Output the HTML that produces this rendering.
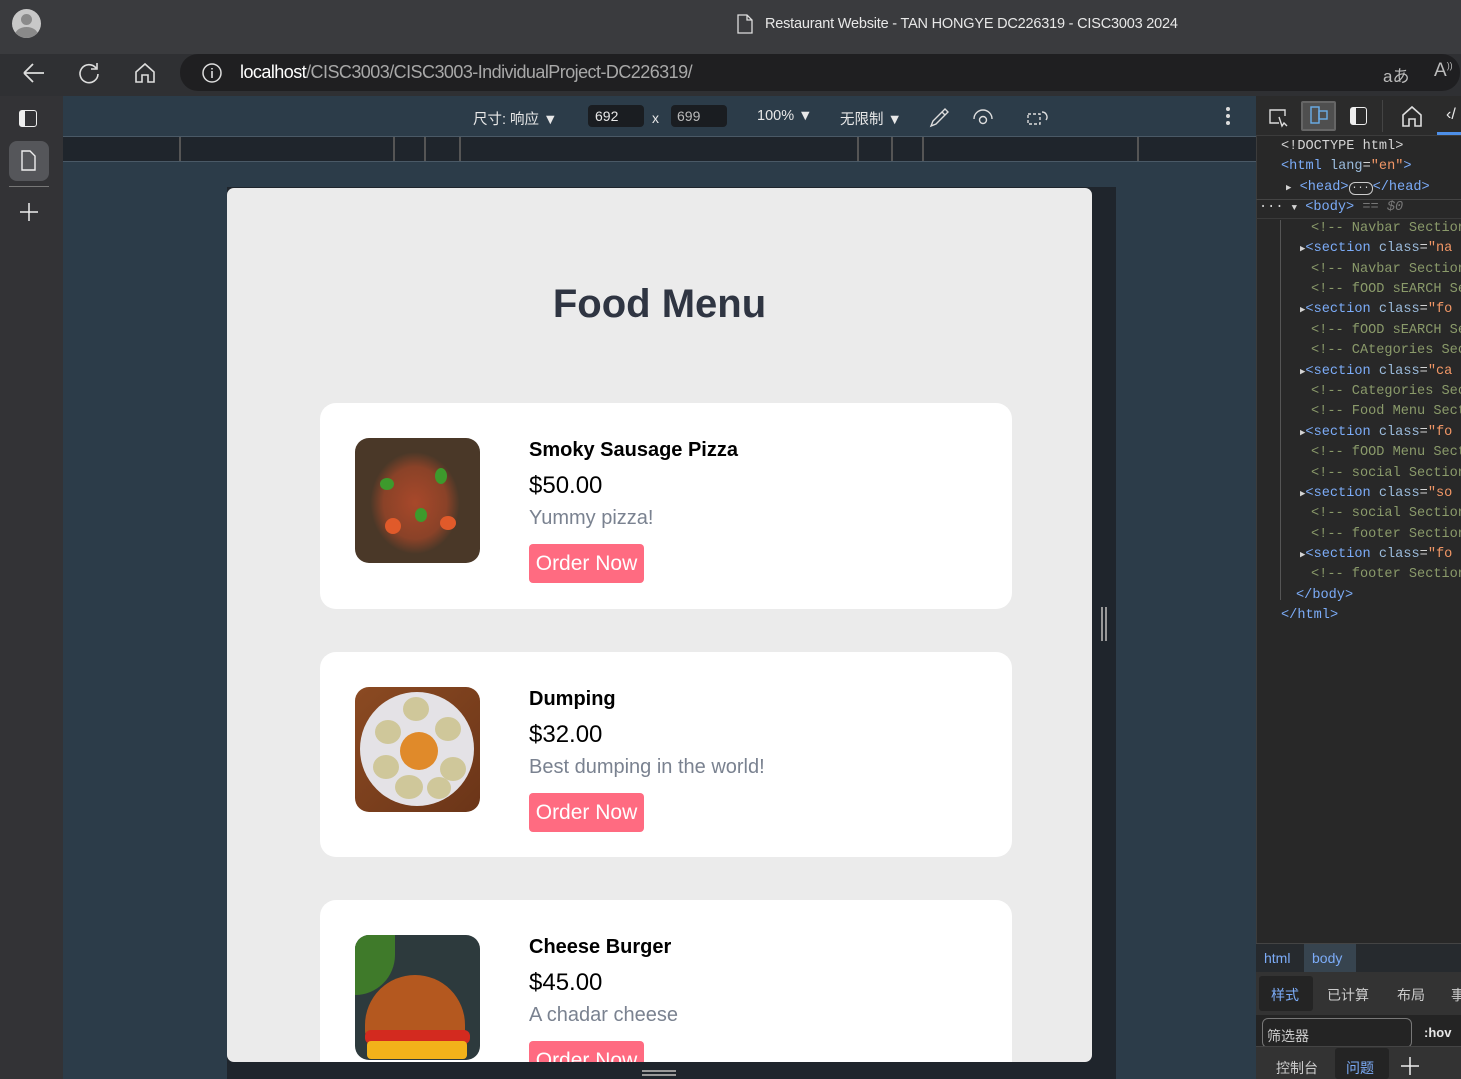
<!DOCTYPE html>
<html><head><meta charset="utf-8">
<style>
*{box-sizing:border-box;margin:0;padding:0}
body{width:1461px;height:1079px;overflow:hidden;background:#242424;font-family:"Liberation Sans","Noto Sans CJK SC",sans-serif;position:relative}
.abs{position:absolute}
.t{color:#e8e8e8;font-size:14px;white-space:nowrap}
.code{font-family:"Liberation Mono","DejaVu Sans Mono",monospace;font-size:13.6px;white-space:nowrap;position:absolute;left:0}
.tag{color:#7cacf8}.at{color:#9bbbdc}.cm{color:#8a9a6a}.val{color:#f29766}.pl{color:#d4d4d4}
.card{position:absolute;left:320px;width:692px;background:#fff;border-radius:16px}
.card .img{position:absolute;left:35px;top:35px;width:125px;height:125px;border-radius:14px;overflow:hidden}
.card h3{position:absolute;left:209px;top:36px;font-size:20px;font-weight:bold;color:#000}
.card .pr{position:absolute;left:209px;top:69px;font-size:24px;color:#000}
.card .ds{position:absolute;left:209px;top:104px;font-size:20px;color:#7a8290}
.card .bt{position:absolute;left:209px;top:141px;width:115px;height:39px;background:#ff6b81;border-radius:4px;color:#fff;font-size:21px;line-height:39px;text-align:center}
</style></head><body>
<div class="abs" style="left:0;top:0;width:1461px;height:54px;background:#3a3b3e"></div>
<div class="abs" style="left:12px;top:9px;width:29px;height:29px;border-radius:50%;background:#c8c8c8;overflow:hidden">
<div class="abs" style="left:9px;top:5px;width:11px;height:11px;border-radius:50%;background:#8a8a8a"></div>
<div class="abs" style="left:3px;top:18px;width:23px;height:16px;border-radius:50%;background:#8a8a8a"></div></div>
<svg class="abs" style="left:736px;top:14px" width="18" height="20"><path d="M2 1h9l5 5v13H2z M11 1v5h5" fill="none" stroke="#ddd" stroke-width="1.3"/></svg>
<div class="abs t" style="left:765px;top:16px;font-size:14.5px;letter-spacing:-0.2px">Restaurant Website - TAN HONGYE DC226319 - CISC3003 2024</div>
<div class="abs" style="left:0;top:54px;width:1461px;height:42px;background:#2f3033"></div>
<svg class="abs" style="left:20px;top:60px" width="28" height="26"><path d="M4 13h20M4 13l9-9M4 13l9 9" fill="none" stroke="#ddd" stroke-width="1.8"/></svg>
<svg class="abs" style="left:76px;top:60px" width="26" height="26"><path d="M20 8a9 9 0 1 0 2 6M21 3v6h-6" fill="none" stroke="#ddd" stroke-width="1.6"/></svg>
<svg class="abs" style="left:132px;top:60px" width="26" height="26"><path d="M4 12l9-8 9 8v10h-6v-7h-6v7H4z" fill="none" stroke="#ddd" stroke-width="1.6"/></svg>
<div class="abs" style="left:180px;top:54px;width:1280px;height:37px;border-radius:18px;background:#1f1f21"></div>
<svg class="abs" style="left:201px;top:62px" width="22" height="22"><circle cx="11" cy="11" r="9" fill="none" stroke="#ddd" stroke-width="1.5"/><path d="M11 9v7M11 6v1.5" stroke="#ddd" stroke-width="1.6"/></svg>
<div class="abs t" style="left:240px;top:62px;font-size:18px;color:#fff;letter-spacing:-0.55px">localhost<span style="color:#a8a8a8">/CISC3003/CISC3003-IndividualProject-DC226319/</span></div>
<div class="abs t" style="left:1383px;top:62px;font-size:17px;color:#bbb">aあ</div>
<div class="abs t" style="left:1434px;top:60px;font-size:19px;color:#bbb">A<sup style="font-size:9px">))</sup></div>
<div class="abs" style="left:0;top:96px;width:63px;height:983px;background:#333336"></div>
<div class="abs" style="left:19px;top:110px;width:18px;height:17px;border:1.6px solid #eee;border-radius:3px;border-left-width:6px"></div>
<div class="abs" style="left:9px;top:141px;width:40px;height:40px;background:#55565a;border-radius:8px"></div>
<svg class="abs" style="left:19px;top:150px" width="20" height="22"><path d="M3 1h8l5 5v14H3z" fill="none" stroke="#eee" stroke-width="1.4"/></svg>
<div class="abs" style="left:9px;top:186px;width:40px;height:1px;background:#777"></div>
<svg class="abs" style="left:18px;top:201px" width="22" height="22"><path d="M11 2v18M2 11h18" stroke="#eee" stroke-width="1.5"/></svg>
<div class="abs" style="left:63px;top:96px;width:1193px;height:983px;background:#2c3c49"></div>
<div class="abs t" style="left:473px;top:108px;font-size:14.5px">尺寸: 响应 ▼</div>
<div class="abs" style="left:588px;top:105px;width:56px;height:22px;background:#1a1d21;border-radius:4px"></div>
<div class="abs t" style="left:595px;top:108px">692</div>
<div class="abs t" style="left:652px;top:110px">x</div>
<div class="abs" style="left:671px;top:105px;width:56px;height:22px;background:#1a1d21;border-radius:4px"></div>
<div class="abs t" style="left:677px;top:108px;color:#bbb">699</div>
<div class="abs t" style="left:757px;top:108px;font-size:14.5px">100% ▼</div>
<div class="abs t" style="left:840px;top:108px;font-size:14.5px">无限制 ▼</div>
<svg class="abs" style="left:928px;top:105px" width="22" height="24"><path d="M3 21l2-5 9-9 3 3-9 9zM14 7l3-3 3 3-3 3z" fill="none" stroke="#ddd" stroke-width="1.4"/></svg>
<svg class="abs" style="left:971px;top:106px" width="24" height="22"><path d="M3 13a9 9 0 0 1 18 0" fill="none" stroke="#ddd" stroke-width="1.4"/><circle cx="12" cy="14" r="3.5" fill="none" stroke="#ddd" stroke-width="1.4"/></svg>
<svg class="abs" style="left:1026px;top:106px" width="24" height="22"><rect x="2" y="8" width="12" height="10" fill="none" stroke="#ddd" stroke-width="1.4" stroke-dasharray="3 2"/><path d="M16 6a5 5 0 0 1 4 8" fill="none" stroke="#ddd" stroke-width="1.4"/></svg>
<div class="abs" style="left:1226px;top:107px;width:4px;height:4px;border-radius:2px;background:#ddd;box-shadow:0 7px #ddd,0 14px #ddd"></div>
<div class="abs" style="left:63px;top:136px;width:1193px;height:26px;background:#1f252c;border-top:1px solid #4a5966;border-bottom:1px solid #4a5966"></div>
<div class="abs" style="left:179px;top:137px;width:2px;height:24px;background:#555"></div>
<div class="abs" style="left:393px;top:137px;width:2px;height:24px;background:#555"></div>
<div class="abs" style="left:424px;top:137px;width:2px;height:24px;background:#555"></div>
<div class="abs" style="left:459px;top:137px;width:2px;height:24px;background:#555"></div>
<div class="abs" style="left:857px;top:137px;width:2px;height:24px;background:#555"></div>
<div class="abs" style="left:891px;top:137px;width:2px;height:24px;background:#555"></div>
<div class="abs" style="left:922px;top:137px;width:2px;height:24px;background:#555"></div>
<div class="abs" style="left:1137px;top:137px;width:2px;height:24px;background:#555"></div>
<div class="abs" style="left:227px;top:187px;width:889px;height:892px;background:#1f252c"></div>
<div class="abs" style="left:1101px;top:607px;width:2px;height:34px;background:#999;box-shadow:4px 0 #999"></div>
<div class="abs" style="left:642px;top:1070px;width:34px;height:2px;background:#999;box-shadow:0 4px #999"></div>
<div class="abs" style="left:227px;top:188px;width:865px;height:874px;background:#ebebeb;border-radius:7px;overflow:hidden">
<div class="abs" style="left:0;top:94px;width:865px;text-align:center;font-size:40px;font-weight:bold;color:#2f3542">Food Menu</div>
</div>
<div class="card" style="top:403px;height:206px">
<div class="img" style="background:radial-gradient(ellipse 42% 48% at 48% 52%,#a8482a 0,#8a4228 60%,#4a3828 85%),#3e3428">
<div class="abs" style="left:25px;top:40px;width:14px;height:12px;border-radius:50%;background:#3d9a2c"></div>
<div class="abs" style="left:80px;top:30px;width:12px;height:16px;border-radius:50%;background:#3d9a2c"></div>
<div class="abs" style="left:60px;top:70px;width:12px;height:14px;border-radius:50%;background:#3d9a2c"></div>
<div class="abs" style="left:30px;top:80px;width:16px;height:16px;border-radius:50%;background:#e05a2a"></div>
<div class="abs" style="left:85px;top:78px;width:16px;height:14px;border-radius:50%;background:#e05a2a"></div>
</div>
<h3>Smoky Sausage Pizza</h3><div class="pr">$50.00</div><div class="ds">Yummy pizza!</div><div class="bt">Order Now</div>
</div>
<div class="card" style="top:652px;height:205px">
<div class="img" style="background:linear-gradient(135deg,#8b4a22,#6b3518)">
<div class="abs" style="left:5px;top:5px;width:114px;height:114px;border-radius:50%;background:#e4e2e6"></div>
<div class="abs" style="left:45px;top:45px;width:38px;height:38px;border-radius:50%;background:#e08a2a"></div>
<div class="abs" style="left:48px;top:10px;width:26px;height:24px;border-radius:50%;background:#cfc79a"></div>
<div class="abs" style="left:20px;top:33px;width:26px;height:24px;border-radius:50%;background:#cfc79a"></div>
<div class="abs" style="left:80px;top:30px;width:26px;height:24px;border-radius:50%;background:#cfc79a"></div>
<div class="abs" style="left:18px;top:68px;width:26px;height:24px;border-radius:50%;background:#cfc79a"></div>
<div class="abs" style="left:85px;top:70px;width:26px;height:24px;border-radius:50%;background:#cfc79a"></div>
<div class="abs" style="left:40px;top:88px;width:28px;height:24px;border-radius:50%;background:#cfc79a"></div>
<div class="abs" style="left:72px;top:90px;width:24px;height:22px;border-radius:50%;background:#cfc79a"></div>
</div>
<h3>Dumping</h3><div class="pr">$32.00</div><div class="ds">Best dumping in the world!</div><div class="bt">Order Now</div>
</div>
<div class="abs" style="left:227px;top:900px;width:865px;height:162px;overflow:hidden">
<div class="card" style="left:93px;top:0;height:206px">
<div class="img" style="background:#2d3a3d">
<div class="abs" style="left:0;top:0;width:40px;height:60px;background:#3f7a2a;border-radius:0 0 40px 0"></div>
<div class="abs" style="left:10px;top:40px;width:100px;height:66px;border-radius:50px 50px 10px 10px;background:#b4581f"></div>
<div class="abs" style="left:10px;top:95px;width:105px;height:14px;border-radius:6px;background:#d32a1f"></div>
<div class="abs" style="left:12px;top:106px;width:100px;height:18px;background:#f2b21a;border-radius:4px"></div>
</div>
<h3>Cheese Burger</h3><div class="pr">$45.00</div><div class="ds">A chadar cheese</div><div class="bt">Order Now</div>
</div></div>
<div class="abs" style="left:1256px;top:96px;width:205px;height:983px;background:#282828;border-left:1px solid #3c3c3c"></div>
<div class="abs" style="left:1256px;top:96px;width:205px;height:40px;background:#2b2b2b;border-bottom:1px solid #3c3c3c"></div>
<svg class="abs" style="left:1267px;top:106px" width="22" height="22"><path d="M12 17H3V4h15v6M12 11l3 9 2-3 3 3" fill="none" stroke="#ddd" stroke-width="1.4"/></svg>
<div class="abs" style="left:1301px;top:101px;width:35px;height:30px;background:#4f4f4f;border:2px solid #666;border-radius:2px"></div>
<svg class="abs" style="left:1308px;top:105px" width="22" height="22"><rect x="3" y="2" width="8" height="16" fill="none" stroke="#6aaeea" stroke-width="1.4"/><rect x="11" y="6" width="8" height="8" fill="none" stroke="#6aaeea" stroke-width="1.4"/></svg>
<div class="abs" style="left:1350px;top:107px;width:17px;height:18px;border:1.6px solid #eee;border-radius:3px;border-left-width:6px"></div>
<div class="abs" style="left:1382px;top:100px;width:1px;height:32px;background:#444"></div>
<svg class="abs" style="left:1400px;top:104px" width="24" height="24"><path d="M3 11l9-8 9 8v11h-6v-7h-6v7H3z" fill="none" stroke="#ddd" stroke-width="1.6"/></svg>
<div class="abs t" style="left:1446px;top:106px;font-size:16px">‹/</div>
<div class="abs" style="left:1437px;top:132px;width:24px;height:3px;background:#4d8fe8"></div>
<div class="abs" style="left:1256px;top:136px;width:205px;height:810px;overflow:hidden">
<div class="code" style="left:25px;top:3px"><span class="pl">&lt;!DOCTYPE html&gt;</span></div>
<div class="code" style="left:25px;top:23px"><span class="tag">&lt;html </span><span class="at">lang</span><span class="pl">=</span><span class="val">"en"</span><span class="tag">&gt;</span></div>
<div class="code" style="left:30px;top:44px"><span class="pl" style="font-size:9px">▶</span> <span class="tag">&lt;head&gt;</span><span class="pl" style="font-size:10px;border:1px solid #ccc;border-radius:6px;padding:0 2px">···</span><span class="tag">&lt;/head&gt;</span></div>
<div class="abs" style="left:0;top:63px;width:205px;height:20px;border-top:1px solid #444;border-bottom:1px solid #3a3a3a"></div>
<div class="code" style="left:3px;top:64px"><span class="pl">···</span> <span class="pl" style="font-size:9px">▼</span> <span class="tag">&lt;body&gt;</span> <span style="color:#777;font-style:italic">== $0</span></div>
<div class="abs" style="left:24px;top:84px;width:1px;height:380px;background:#555"></div>
<div class="code" style="left:55px;top:85px"><span class="cm">&lt;!-- Navbar Section</span></div>
<div class="code" style="left:44px;top:105px"><span class="pl" style="font-size:9px">▶</span><span class="tag">&lt;section </span><span class="at">class</span><span class="pl">=</span><span class="val">"na</span></div>
<div class="code" style="left:55px;top:126px"><span class="cm">&lt;!-- Navbar Section</span></div>
<div class="code" style="left:55px;top:146px"><span class="cm">&lt;!-- fOOD sEARCH Se</span></div>
<div class="code" style="left:44px;top:166px"><span class="pl" style="font-size:9px">▶</span><span class="tag">&lt;section </span><span class="at">class</span><span class="pl">=</span><span class="val">"fo</span></div>
<div class="code" style="left:55px;top:187px"><span class="cm">&lt;!-- fOOD sEARCH Se</span></div>
<div class="code" style="left:55px;top:207px"><span class="cm">&lt;!-- CAtegories Sec</span></div>
<div class="code" style="left:44px;top:228px"><span class="pl" style="font-size:9px">▶</span><span class="tag">&lt;section </span><span class="at">class</span><span class="pl">=</span><span class="val">"ca</span></div>
<div class="code" style="left:55px;top:248px"><span class="cm">&lt;!-- Categories Sec</span></div>
<div class="code" style="left:55px;top:268px"><span class="cm">&lt;!-- Food Menu Sect</span></div>
<div class="code" style="left:44px;top:289px"><span class="pl" style="font-size:9px">▶</span><span class="tag">&lt;section </span><span class="at">class</span><span class="pl">=</span><span class="val">"fo</span></div>
<div class="code" style="left:55px;top:309px"><span class="cm">&lt;!-- fOOD Menu Sect</span></div>
<div class="code" style="left:55px;top:330px"><span class="cm">&lt;!-- social Section</span></div>
<div class="code" style="left:44px;top:350px"><span class="pl" style="font-size:9px">▶</span><span class="tag">&lt;section </span><span class="at">class</span><span class="pl">=</span><span class="val">"so</span></div>
<div class="code" style="left:55px;top:370px"><span class="cm">&lt;!-- social Section</span></div>
<div class="code" style="left:55px;top:391px"><span class="cm">&lt;!-- footer Section</span></div>
<div class="code" style="left:44px;top:411px"><span class="pl" style="font-size:9px">▶</span><span class="tag">&lt;section </span><span class="at">class</span><span class="pl">=</span><span class="val">"fo</span></div>
<div class="code" style="left:55px;top:431px"><span class="cm">&lt;!-- footer Section</span></div>
<div class="code" style="left:40px;top:452px"><span class="tag">&lt;/body&gt;</span></div>
<div class="code" style="left:25px;top:472px"><span class="tag">&lt;/html&gt;</span></div>
</div>
<div class="abs" style="left:1256px;top:943px;width:205px;height:1px;background:#444"></div>
<div class="abs" style="left:1256px;top:944px;width:205px;height:28px;background:#262a2e"></div>
<div class="abs" style="left:1304px;top:944px;width:52px;height:28px;background:#37444f"></div>
<div class="abs t" style="left:1264px;top:950px;color:#7cacf8">html</div>
<div class="abs t" style="left:1312px;top:950px;color:#7cacf8">body</div>
<div class="abs" style="left:1256px;top:972px;width:205px;height:43px;background:#333"></div>
<div class="abs" style="left:1259px;top:976px;width:54px;height:35px;background:#242424;border-radius:3px"></div>
<div class="abs t" style="left:1271px;top:985px;color:#7cacf8">样式</div>
<div class="abs t" style="left:1327px;top:985px;color:#ccc">已计算</div>
<div class="abs t" style="left:1397px;top:985px;color:#ccc">布局</div>
<div class="abs t" style="left:1451px;top:985px;color:#ccc">事</div>
<div class="abs" style="left:1256px;top:1015px;width:205px;height:31px;background:#242424"></div>
<div class="abs" style="left:1262px;top:1018px;width:150px;height:30px;border:1px solid #777;border-radius:6px"></div>
<div class="abs t" style="left:1267px;top:1026px;color:#ccc">筛选器</div>
<div class="abs t" style="left:1424px;top:1025px;font-weight:bold;font-size:13px">:hov</div>
<div class="abs" style="left:1256px;top:1046px;width:205px;height:33px;background:#333;border-top:1px solid #444"></div>
<div class="abs" style="left:1335px;top:1048px;width:54px;height:31px;background:#242424;border-radius:3px"></div>
<div class="abs t" style="left:1276px;top:1058px;color:#ccc">控制台</div>
<div class="abs t" style="left:1346px;top:1058px;color:#7cacf8">问题</div>
<svg class="abs" style="left:1400px;top:1056px" width="20" height="20"><path d="M10 1v18M1 10h18" stroke="#eee" stroke-width="1.5"/></svg>
</body></html>
